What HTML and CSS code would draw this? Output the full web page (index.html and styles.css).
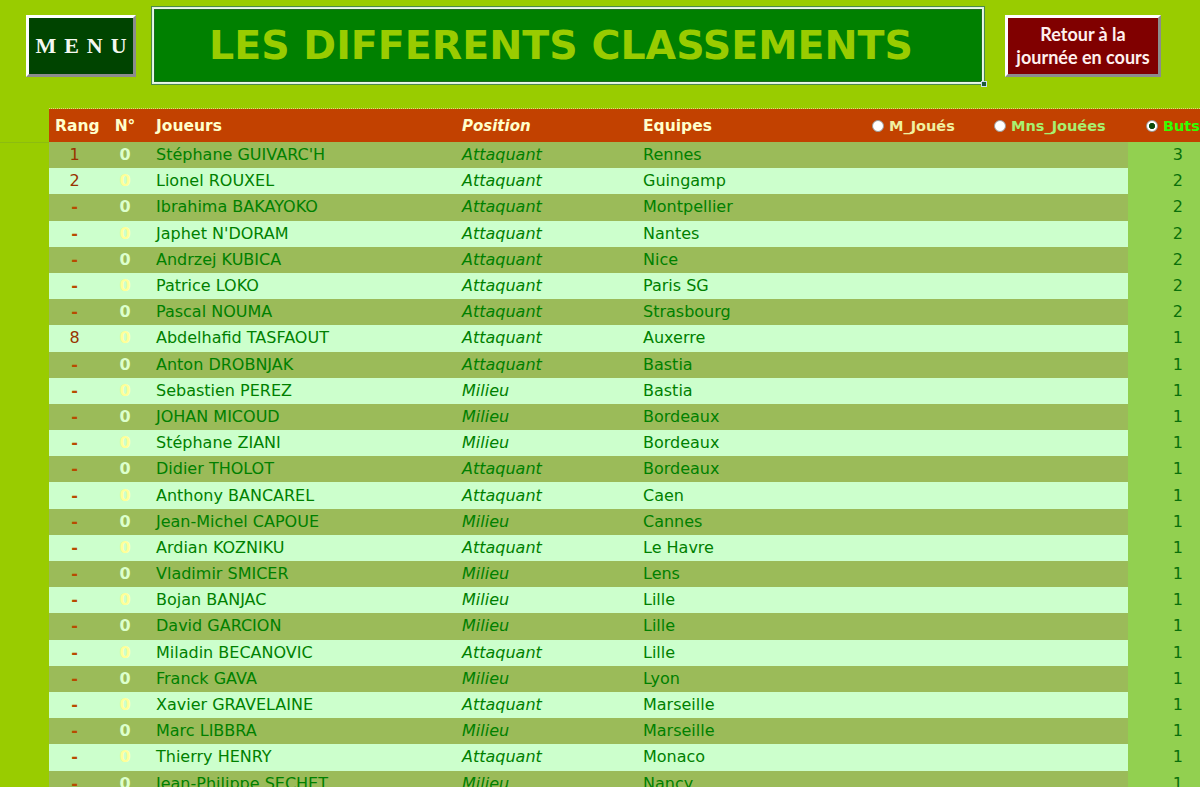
FILE: index.html
```html
<!DOCTYPE html>
<html lang="fr">
<head>
<meta charset="utf-8">
<title>Les différents classements</title>
<link rel="stylesheet" href="styles.css">
</head>
<body>
<div class="topbar">
  <div class="menu-btn">MENU</div>
  <div class="title-box"><h1>LES DIFFERENTS CLASSEMENTS</h1><span class="handle"></span></div>
  <div class="retour-btn">Retour à la<br>journée en cours</div>
</div>
<div class="sheet">
  <div class="gutter"></div>
  <div class="table">
    <div class="thead">
      <div class="c-rang">Rang</div>
      <div class="c-num">N°</div>
      <div class="c-name">Joueurs</div>
      <div class="c-pos">Position</div>
      <div class="c-team">Equipes</div>
      <div class="radios">
        <span class="radio r1"><i class="dot"></i>M_Joués</span>
        <span class="radio r2"><i class="dot"></i>Mns_Jouées</span>
        <span class="radio r3"><i class="dot on"></i>Buts</span>
      </div>
    </div>
    <div id="rows"></div>
  </div>
</div>
<script src="app.js"></script>
</body>
</html>
```
FILE: app.js
```js
const data = [
["1","Stéphane GUIVARC'H","Attaquant","Rennes",3],
["2","Lionel ROUXEL","Attaquant","Guingamp",2],
["-","Ibrahima BAKAYOKO","Attaquant","Montpellier",2],
["-","Japhet N'DORAM","Attaquant","Nantes",2],
["-","Andrzej KUBICA","Attaquant","Nice",2],
["-","Patrice LOKO","Attaquant","Paris SG",2],
["-","Pascal NOUMA","Attaquant","Strasbourg",2],
["8","Abdelhafid TASFAOUT","Attaquant","Auxerre",1],
["-","Anton DROBNJAK","Attaquant","Bastia",1],
["-","Sebastien PEREZ","Milieu","Bastia",1],
["-","JOHAN MICOUD","Milieu","Bordeaux",1],
["-","Stéphane ZIANI","Milieu","Bordeaux",1],
["-","Didier THOLOT","Attaquant","Bordeaux",1],
["-","Anthony BANCAREL","Attaquant","Caen",1],
["-","Jean-Michel CAPOUE","Milieu","Cannes",1],
["-","Ardian KOZNIKU","Attaquant","Le Havre",1],
["-","Vladimir SMICER","Milieu","Lens",1],
["-","Bojan BANJAC","Milieu","Lille",1],
["-","David GARCION","Milieu","Lille",1],
["-","Miladin BECANOVIC","Attaquant","Lille",1],
["-","Franck GAVA","Milieu","Lyon",1],
["-","Xavier GRAVELAINE","Attaquant","Marseille",1],
["-","Marc LIBBRA","Milieu","Marseille",1],
["-","Thierry HENRY","Attaquant","Monaco",1],
["-","Jean-Philippe SECHET","Milieu","Nancy",1]
];
const rows = document.getElementById("rows");
data.forEach((d, i) => {
  const r = document.createElement("div");
  r.className = "row " + (i % 2 === 0 ? "dark" : "light");
  r.innerHTML =
    '<div class="c-rang ' + (d[0] === "-" ? "dash" : "") + '">' + d[0] + '</div>' +
    '<div class="c-num">0</div>' +
    '<div class="c-name">' + d[1] + '</div>' +
    '<div class="c-pos">' + d[2] + '</div>' +
    '<div class="c-team">' + d[3] + '</div>' +
    '<div class="c-buts">' + d[4] + '</div>';
  rows.appendChild(r);
});
```
FILE: styles.css
```css
html, body {
  margin: 0;
  padding: 0;
  background: #99cc00;
  overflow: hidden;
  height: 787px;
}
body {
  font-family: "Comic Sans MS", "DejaVu Sans", sans-serif;
}
.topbar {
  display: flex;
  align-items: flex-start;
  height: 108px;
  padding-left: 26px;
  box-sizing: border-box;
}
.menu-btn {
  margin-top: 15px;
  width: 110px;
  height: 62px;
  box-sizing: border-box;
  background: #004400;
  border: 3px solid;
  border-color: #ffffff #8c8c8c #8c8c8c #ffffff;
  color: #f4f8f0;
  font-family: "Liberation Serif", serif;
  font-weight: bold;
  font-size: 22px;
  letter-spacing: 8px;
  padding-left: 8px;
  display: flex;
  align-items: center;
  justify-content: center;
}
.title-box {
  position: relative;
  margin-left: 15px;
  margin-top: 6px;
  width: 834px;
  height: 79px;
  box-sizing: border-box;
  padding-right: 14px;
  background: #008000;
  border: 1px solid #4a8a4a;
  box-shadow: inset 0 0 0 1px #dff0df, inset 0 0 0 2px #e8f8e8, inset 0 0 0 3px #1d6b1d;
  display: flex;
  align-items: center;
  justify-content: center;
}
.title-box h1 {
  margin: 0 0 2px 0;
  font-size: 39.5px;
  font-weight: bold;
  color: #99cc00;
  letter-spacing: 0;
  white-space: nowrap;
}
.handle {
  position: absolute;
  right: -3px;
  bottom: -3px;
  width: 4px;
  height: 4px;
  background: #1c5a3a;
  border: 1px solid #cde;
}
.retour-btn {
  margin-top: 15px;
  margin-left: 20px;
  width: 156px;
  height: 62px;
  box-sizing: border-box;
  background: #800000;
  border: 3px solid;
  border-color: #ffffff #8c8c8c #8c8c8c #ffffff;
  color: #fff0ee;
  font-family: Lato, "Liberation Sans", sans-serif;
  font-weight: bold;
  font-size: 18px;
  line-height: 23px;
  text-align: center;
  white-space: nowrap;
  display: flex;
  align-items: center;
  justify-content: center;
}
.sheet {
  display: flex;
}
.gutter {
  width: 49px;
  flex: none;
  margin-top: 34px;
  border-top: 1px solid #8cbc10;
}
.table {
  width: 1151px;
  flex: none;
  border-top: 1px dotted #e8d080;
}
.thead {
  display: grid;
  grid-template-columns: 51px 50px 306px 181px 231px 332px;
  height: 33px;
  align-items: center;
  background: #c24100;
  color: #ffffcc;
  font-weight: bold;
  font-size: 15.5px;
  white-space: nowrap;
}
.row {
  display: grid;
  grid-template-columns: 51px 50px 306px 181px 491px 72px;
  height: 26.2px;
  align-items: center;
  font-size: 16px;
  line-height: 20px;
}
.c-rang, .c-num { text-align: center; }
.thead .c-rang { padding-left: 6px; text-align: left; }
.c-name, .c-pos, .c-team { padding-left: 6px; white-space: nowrap; }
.c-pos { font-style: italic; }
.thead .c-pos { font-size: 15px; }
.radios {
  display: flex;
  align-items: center;
  padding-left: 4px;
  font-size: 14.5px;
}
.radio {
  display: inline-flex;
  align-items: center;
  gap: 5px;
}
.r1 { width: 122px; color: #f0f0a0; }
.r2 { width: 152px; color: #a8f070; }
.r3 { color: #33ff00; }
.dot {
  width: 10px;
  height: 10px;
  border-radius: 50%;
  background: #fff;
  border: 1px solid #9a9a9a;
  box-sizing: content-box;
  flex: none;
}
.dot.on {
  background: radial-gradient(circle, #0a4a0a 0 2.8px, #ffffff 3.4px);
}
.row .c-rang { color: #993300; }
.row .c-rang.dash { color: #b84a00; font-weight: bold; }
.row .c-name, .row .c-pos, .row .c-team { color: #008000; }
.dark { background: #9bbb59; }
.light { background: #ccffcc; }
.dark .c-num { color: #dcffcc; font-weight: bold; }
.light .c-num { color: #ffff99; font-weight: bold; }
.c-buts {
  background: #92d050;
  height: 100%;
  display: flex;
  align-items: center;
  justify-content: flex-end;
  padding-right: 17px;
  color: #0a700a;
}
```
